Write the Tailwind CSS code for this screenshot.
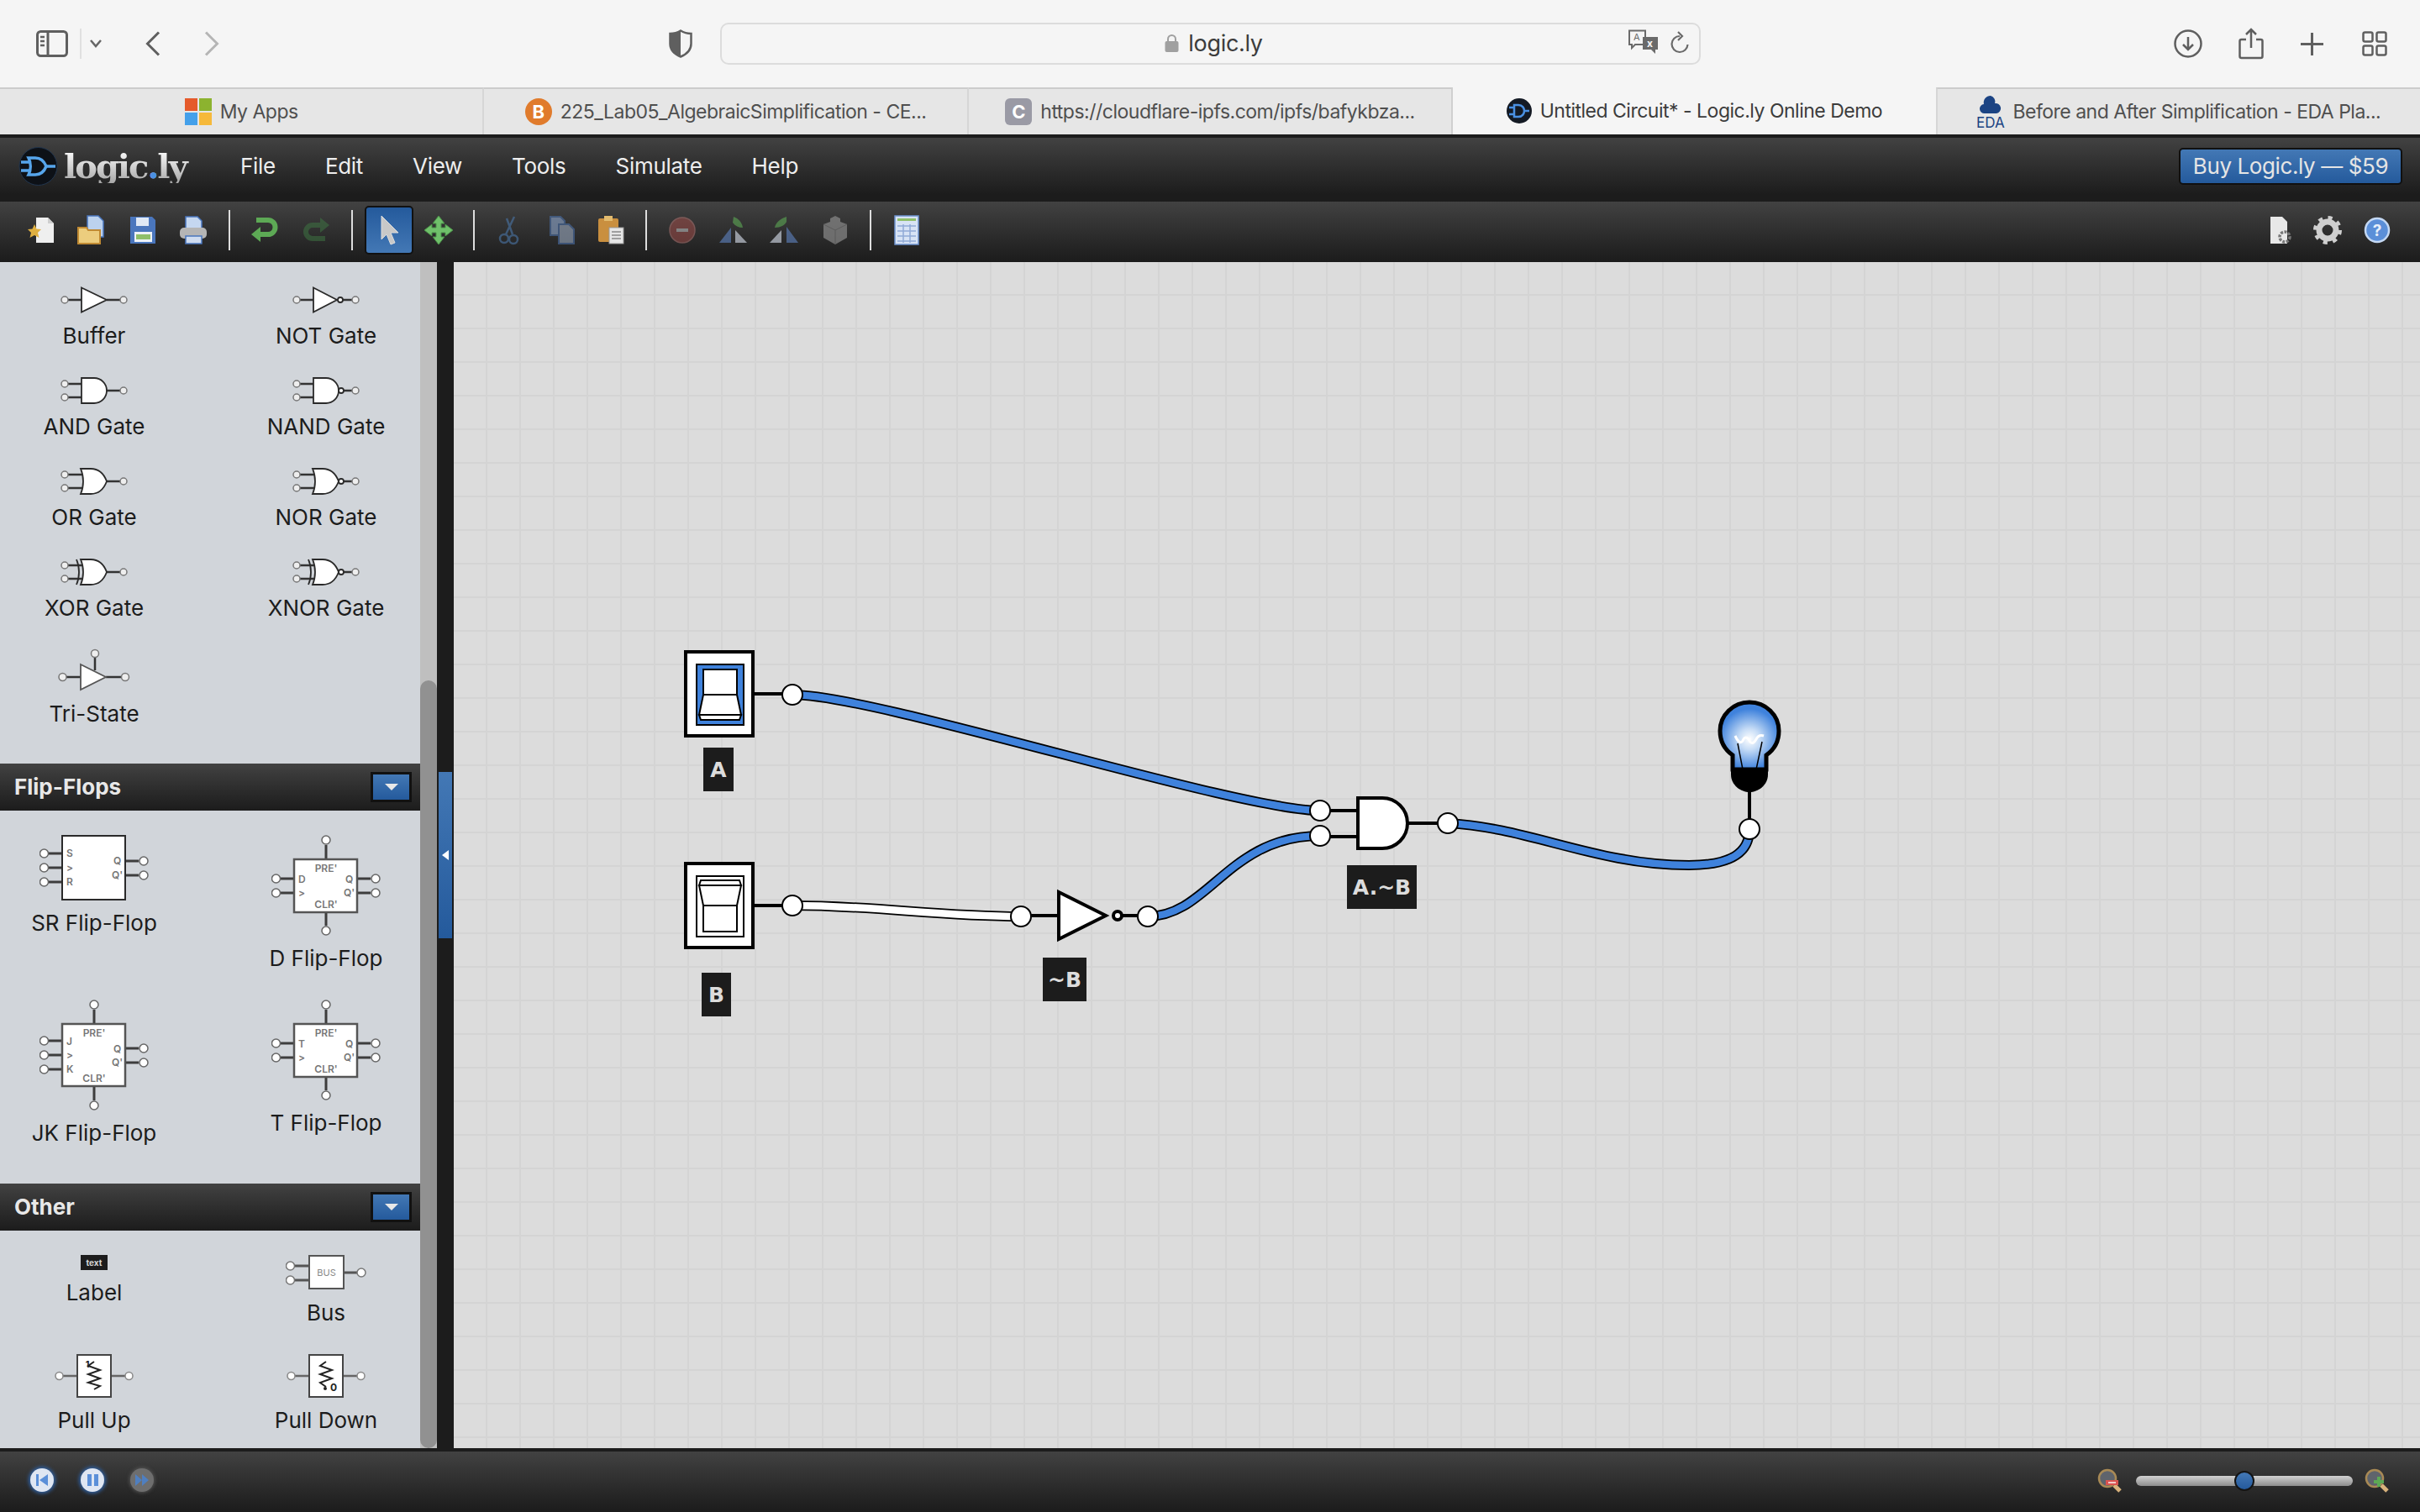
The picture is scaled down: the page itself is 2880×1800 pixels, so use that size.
<!DOCTYPE html>
<html lang="en">
<head>
  <meta charset="UTF-8">
  <title>Untitled Circuit* - Logic.ly Online Demo</title>
  <script src="https://cdn.jsdelivr.net/npm/@tailwindcss/browser@4"></script>
</head>
<body class="w-[2880px] h-[1800px] overflow-hidden flex flex-col bg-[#1c1c1c] font-[family-name:Inter,'Noto_Sans',sans-serif]">

  <!-- shared gate drawings -->
  <svg class="hidden">
    <symbol id="pins-in" viewBox="0 0 80 32">
      <path d="M9 8H26M9 24H26M55 16H71" stroke="#333" stroke-width="2.500" fill="none"/>
      <circle cx="5" cy="8" r="4" fill="#eee" stroke="#777" stroke-width="1.500"/>
      <circle cx="5" cy="24" r="4" fill="#eee" stroke="#777" stroke-width="1.500"/>
      <circle cx="75" cy="16" r="4" fill="#eee" stroke="#777" stroke-width="1.500"/>
    </symbol>
  </svg>

  <!-- browser toolbar -->
  <div class="h-[104px] shrink-0 bg-[#f5f5f5] flex items-center">
    <svg class="ml-[43px] w-[38px] h-[32px]" viewBox="0 0 38 32" fill="none" stroke="#5f5f5f" stroke-width="3"><rect x="1.500" y="1.500" width="35" height="29" rx="4"/><path d="M14 2V30"/><path d="M5 8H10M5 13H10M5 18H10" stroke-width="2.500"/></svg>
    <div class="ml-[14px] w-[2px] h-[36px] bg-[#e0e0e0]"></div>
    <svg class="ml-[10px] w-[14px] h-[10px]" viewBox="0 0 14 10" fill="none" stroke="#666" stroke-width="2.500"><path d="M1 1L7 8L13 1"/></svg>
    <svg class="ml-[52px] w-[18px] h-[30px]" viewBox="0 0 18 30" fill="none" stroke="#5f5f5f" stroke-width="3"><path d="M16 1.500L2.500 15L16 28.500"/></svg>
    <svg class="ml-[52px] w-[18px] h-[30px]" viewBox="0 0 18 30" fill="none" stroke="#b5b5b5" stroke-width="3"><path d="M2 1.500L15.500 15L2 28.500"/></svg>
    <svg class="ml-[535px] w-[28px] h-[34px]" viewBox="0 0 28 34"><path d="M14 1.500C18 4 22 5 26.500 5V17C26.500 25 20 30 14 32.500C8 30 1.500 25 1.500 17V5C6 5 10 4 14 1.500Z" fill="none" stroke="#5f5f5f" stroke-width="2.500"/><path d="M14 1.500C10 4 6 5 1.500 5V17C1.500 25 8 30 14 32.500Z" fill="#5f5f5f"/></svg>
    <div class="relative ml-[33px] w-[1167px] h-[50px] pl-[8px] pb-[2px] border-2 border-[#dcdcdc] rounded-[10px] flex items-center justify-center gap-[11px]">
      <svg class="w-[17px] h-[22px]" viewBox="0 0 17 22"><path d="M4 10V6.500a4.500 4.500 0 0 1 9 0V10" fill="none" stroke="#a0a0a0" stroke-width="2"/><rect x="0.500" y="9" width="16" height="13" rx="2" fill="#a0a0a0"/></svg>
      <span class="text-[27px] leading-none text-[#3c3c3c] tracking-[-0.3px]">logic.ly</span>
      <svg class="absolute right-[47px] top-[6px] w-[38px] h-[30px]" viewBox="0 0 38 30"><path d="M2 1.500H21V18H9L5 22V18H2Z" fill="#f5f5f5" stroke="#6a6a6a" stroke-width="2"/><path d="M18 9H36V24H33V29L28 24H18Z" fill="#6a6a6a"/><text x="7" y="13" font-size="11" fill="#6a6a6a">A</text><text x="23" y="21" font-size="12" font-weight="700" fill="#f5f5f5">x</text></svg>
      <svg class="absolute right-[12px] top-[8px] w-[22px] h-[28px]" viewBox="0 0 22 28" fill="none" stroke="#6a6a6a" stroke-width="2.200"><path d="M11 6A9.500 9.500 0 1 0 20.500 16"/><path d="M9 1L14 6L9 11"/></svg>
    </div>
    <div class="ml-auto pr-[39px] flex items-center">
      <svg class="w-[34px] h-[34px]" viewBox="0 0 34 34" fill="none" stroke="#5f5f5f" stroke-width="2.500"><circle cx="17" cy="17" r="15.500"/><path d="M17 9V24M11 18L17 24L23 18"/></svg>
      <svg class="ml-[43px] w-[30px] h-[38px]" viewBox="0 0 30 38" fill="none" stroke="#5f5f5f" stroke-width="2.500"><path d="M9 14H3.500a2 2 0 0 0-2 2V34a2 2 0 0 0 2 2H26.500a2 2 0 0 0 2-2V16a2 2 0 0 0-2-2H21"/><path d="M15 24V2M9 8L15 2L21 8"/></svg>
      <svg class="ml-[44px] w-[27px] h-[27px]" viewBox="0 0 27 27" fill="none" stroke="#5f5f5f" stroke-width="3"><path d="M13.500 0V27M0 13.500H27"/></svg>
      <svg class="ml-[46px] w-[30px] h-[30px]" viewBox="0 0 30 30" fill="none" stroke="#5f5f5f" stroke-width="2.500"><rect x="1.500" y="1.500" width="11" height="11" rx="2"/><rect x="17.500" y="1.500" width="11" height="11" rx="2"/><rect x="1.500" y="17.500" width="11" height="11" rx="2"/><rect x="17.500" y="17.500" width="11" height="11" rx="2"/></svg>
    </div>
  </div>

  <!-- tab strip -->
  <div class="h-[56px] shrink-0 flex text-[23px] leading-none text-[#4f4f4f] bg-[#f5f5f5]">
    <div class="flex-1 min-w-0 bg-[#e6e6e6] border-t-2 border-t-[#cccccc] border-r-2 border-r-[#d6d6d6] flex items-center justify-center gap-[10px]">
      <div class="grid grid-cols-2 gap-[2px] w-[32px] h-[32px]"><div class="bg-[#e55a2b]"></div><div class="bg-[#8cb32f]"></div><div class="bg-[#44a0ea]"></div><div class="bg-[#f6b93a]"></div></div>
      <span class="tracking-[-0.5px]">My Apps</span>
    </div>
    <div class="flex-1 min-w-0 bg-[#e6e6e6] border-t-2 border-t-[#cccccc] border-r-2 border-r-[#d6d6d6] flex items-center justify-center gap-[10px]">
      <div class="w-[32px] h-[32px] rounded-full bg-[#e07b2c] text-white text-[22px] font-bold flex items-center justify-center">B</div>
      <span class="tracking-[-0.5px] whitespace-nowrap">225_Lab05_AlgebraicSimplification - CE...</span>
    </div>
    <div class="flex-1 min-w-0 bg-[#e6e6e6] border-t-2 border-t-[#cccccc] border-r-2 border-r-[#cfcfcf] flex items-center justify-center gap-[10px]">
      <div class="w-[32px] h-[32px] rounded-[6px] bg-[#9a9aa5] text-white text-[22px] font-bold flex items-center justify-center">C</div>
      <span class="tracking-[-0.5px] whitespace-nowrap">https://cloudflare-ipfs.com/ipfs/bafykbza...</span>
    </div>
    <div class="flex-1 min-w-0 flex items-center justify-center gap-[10px] text-[#3c3c3c]">
      <svg class="w-[30px] h-[30px]" viewBox="0 0 30 30"><circle cx="15" cy="15" r="15" fill="#141a24"/><path d="M3 11H9M3 19H9M21 15H27M9 8H14C19 8 21 12 21 15C21 18 19 22 14 22H9Z" fill="none" stroke="#4a90e2" stroke-width="2.500"/></svg>
      <span class="tracking-[-0.5px] whitespace-nowrap">Untitled Circuit* - Logic.ly Online Demo</span>
    </div>
    <div class="flex-1 min-w-0 bg-[#e6e6e6] border-t-2 border-t-[#cccccc] border-l-2 border-l-[#d6d6d6] flex items-center justify-center gap-[10px]">
      <div class="w-[33px] h-[44px] flex flex-col items-center justify-end">
        <svg class="w-[26px] h-[24px]" viewBox="0 0 26 24"><path d="M6 22a5.500 5.500 0 0 1-1-11a8 8 0 0 1 8-10a7 7 0 0 1 5 9a6 6 0 0 1 2 12Z" fill="#1b4383"/></svg>
        <span class="text-[17px] leading-[18px] text-[#1b4383]">EDA</span>
      </div>
      <span class="tracking-[-0.5px] whitespace-nowrap">Before and After Simplification - EDA Pla...</span>
    </div>
  </div>

  <!-- logic.ly menu bar -->
  <div class="mt-[4px] h-[68px] shrink-0 bg-gradient-to-b from-[#424242] to-[#1c1c1c] flex items-center">
    <svg class="ml-[22px] w-[47px] h-[46px]" viewBox="0 0 47 46"><circle cx="23.500" cy="23" r="22.500" fill="#0d1117" stroke="#22364f" stroke-width="1"/><path d="M3 18H13M3 28H13M33 23H44" fill="none" stroke="#56a5ec" stroke-width="3.500"/><path d="M12 13H20C27 13 31 18 33 23C31 28 27 33 20 33H12C15 27 15 19 12 13Z" fill="none" stroke="#56a5ec" stroke-width="3.500"/></svg>
    <div class="ml-[7px] w-[160px] font-[family-name:'DejaVu_Serif',serif] font-bold text-[40px] leading-none tracking-[-2px] bg-gradient-to-b from-white to-[#a8a8a8] bg-clip-text text-transparent whitespace-nowrap">logic<span class="text-[#4a90e2]">.</span>ly</div>
    <nav class="ml-[50px] flex gap-[59px] text-[26px] leading-none tracking-[-0.3px] text-[#eeeeee]">
      <span>File</span><span>Edit</span><span>View</span><span>Tools</span><span>Simulate</span><span>Help</span>
    </nav>
    <div class="ml-auto mr-[21px] w-[266px] h-[44px] rounded-[5px] border-2 border-[#101010] bg-gradient-to-b from-[#4378b5] to-[#245a9c] text-[26px] leading-none tracking-[-0.4px] text-[#e5e5e5] flex items-center justify-center whitespace-nowrap">Buy Logic.ly — $59</div>
  </div>

  <!-- tool bar -->
  <div class="mt-[8px] h-[72px] pb-[4px] shrink-0 bg-gradient-to-b from-[#424242] to-[#1c1c1c] flex items-center">
    <svg class="ml-[32px] w-[36px] h-[36px]" viewBox="0 0 36 36"><path d="M11 3H25L32 10V33H11Z" fill="#efefef"/><path d="M25 3V10H32Z" fill="#cfcfcf"/><path d="M9 11L11.500 16.500L17 17L13 21L14.500 27L9 24L3.500 27L5 21L1 17L6.500 16.500Z" fill="#e0b040"/></svg>
    <svg class="ml-[22px] w-[36px] h-[36px]" viewBox="0 0 36 36"><path d="M14 1H27L33 7V26H14Z" fill="#bcd2ee" stroke="#4a76bd" stroke-width="1.500"/><path d="M3 15H13L15 18H29V34H3Z" fill="#eccd7e" stroke="#c08a33" stroke-width="2"/></svg>
    <svg class="ml-[26px] w-[36px] h-[36px]" viewBox="0 0 36 36"><path d="M3 2H29L33 6V34H3Z" fill="#4a76bd"/><rect x="10" y="3" width="15" height="10" fill="#dfe8f5"/><rect x="8" y="20" width="21" height="12" fill="#eef2f8"/><rect x="10" y="23" width="17" height="6" fill="#8fbf6a"/></svg>
    <svg class="ml-[24px] w-[36px] h-[36px]" viewBox="0 0 36 36"><path d="M9 2H23L28 7V18H9Z" fill="#c5d7f0" stroke="#4a76bd" stroke-width="1.500"/><rect x="2" y="15" width="32" height="13" rx="5" fill="#b5b5b5"/><rect x="9" y="25" width="19" height="9" fill="#cfdcf0" stroke="#4a76bd" stroke-width="1.500"/></svg>
    <div class="ml-[24px] w-[2px] h-[48px] bg-[#dddddd]"></div>
    <svg class="ml-[22px] w-[36px] h-[36px]" viewBox="0 0 36 36" fill="none"><path d="M9 6H23a8 8 0 0 1 0 17H8" stroke="#5da955" stroke-width="6"/><path d="M14 14L3 23L14 32Z" fill="#5da955"/></svg>
    <svg class="ml-[26px] w-[36px] h-[36px] opacity-50" viewBox="0 0 36 36" fill="none"><path d="M29 12H14a7 7 0 0 0 0 16H29" stroke="#3f7a44" stroke-width="6"/><path d="M23 3L34 12L23 21Z" fill="#3f7a44"/></svg>
    <div class="ml-[24px] w-[2px] h-[48px] bg-[#dddddd]"></div>
    <div class="ml-[14px] w-[58px] h-[58px] rounded-[5px] border-2 border-[#111111] bg-gradient-to-b from-[#245a9c] to-[#4378b5] flex items-center justify-center">
      <svg class="w-[28px] h-[36px]" viewBox="0 0 28 36"><path d="M5 1L25 21L16 21L21 33L16 35L11 23L5 29Z" fill="#c8c8c8" stroke="#dddddd"/></svg>
    </div>
    <svg class="ml-[12px] w-[36px] h-[36px]" viewBox="0 0 36 36"><path d="M18 1L25 10H21V15H26V11L35 18L26 25V21H21V26H25L18 35L11 26H15V21H10V25L1 18L10 11V15H15V10H11Z" fill="#6fc06a" stroke="#4a8f48"/></svg>
    <div class="ml-[23px] w-[2px] h-[48px] bg-[#dddddd]"></div>
    <svg class="ml-[24px] w-[36px] h-[36px] opacity-60" viewBox="0 0 36 36" fill="none" stroke="#4a76a8" stroke-width="2.500"><path d="M23 2L13 23M14 4L21 23"/><circle cx="11" cy="28" r="5"/><circle cx="22" cy="29" r="5"/></svg>
    <svg class="ml-[25px] w-[36px] h-[36px] opacity-60" viewBox="0 0 36 36"><path d="M5 2H17L22 7V24H5Z" fill="#8fa8cf" stroke="#4a6fa8" stroke-width="2"/><path d="M15 11H27L33 17V34H15Z" fill="#9aa9bf" stroke="#4a6fa8" stroke-width="2"/></svg>
    <svg class="ml-[23px] w-[36px] h-[36px]" viewBox="0 0 36 36"><rect x="3" y="4" width="24" height="28" rx="2" fill="#c98f3f"/><rect x="10" y="1" width="10" height="6" fill="#e2bb6f"/><rect x="16" y="15" width="17" height="19" fill="#e6e6e6" stroke="#999999"/><path d="M19 20H30M19 24H30M19 28H30" stroke="#888888" stroke-width="1.500"/></svg>
    <div class="ml-[23px] w-[2px] h-[48px] bg-[#dddddd]"></div>
    <svg class="ml-[24px] w-[36px] h-[36px] opacity-45" viewBox="0 0 36 36"><circle cx="18" cy="18" r="15" fill="#b5524e" stroke="#d08582" stroke-width="1.500"/><rect x="11" y="16" width="14" height="4" fill="#e8e8e8"/></svg>
    <svg class="ml-[25px] w-[36px] h-[36px] opacity-60" viewBox="0 0 36 36"><path d="M15 15V33H1Z" fill="#5f84c2"/><path d="M20 18V33H34Z" fill="#dce4f2"/><path d="M18 2C24 4 28 9 29 15C24 15 20 13 17 9Z" fill="#5da955"/></svg>
    <svg class="ml-[24px] w-[36px] h-[36px] opacity-60" viewBox="0 0 36 36"><path d="M21 14V33H35Z" fill="#5f84c2"/><path d="M15 18V33H1Z" fill="#dce4f2"/><path d="M21 2C14 4 8 9 7 15C14 15 19 12 21 8Z" fill="#5da955"/></svg>
    <svg class="ml-[25px] w-[36px] h-[36px] opacity-70" viewBox="0 0 36 36"><path d="M18 1L24 4V8L32 11V27L18 35L4 27V11L12 8V4Z" fill="#8a8a8a"/><path d="M4 11L18 18L32 11M18 18V35" stroke="#6f6f6f" fill="none"/></svg>
    <div class="ml-[23px] w-[2px] h-[48px] bg-[#dddddd]"></div>
    <svg class="ml-[24px] w-[36px] h-[36px]" viewBox="0 0 36 36"><rect x="4" y="1" width="28" height="34" fill="#d7e3f5" stroke="#6f94cf" stroke-width="1.500"/><rect x="7" y="4" width="22" height="3" fill="#8fbf6a"/><path d="M7 13H29M7 19H29M7 25H29M7 31H29M14 11V33M22 11V33" stroke="#90aad6" stroke-width="1.500"/></svg>
    <div class="ml-auto pr-[33px] flex items-center">
      <svg class="w-[36px] h-[36px]" viewBox="0 0 36 36"><path d="M8 2H22L28 8V34H8Z" fill="#e8e8e8"/><circle cx="25" cy="26" r="6" fill="none" stroke="#777777" stroke-width="3.500" stroke-dasharray="3 1.500"/></svg>
      <svg class="ml-[22px] w-[36px] h-[36px]" viewBox="0 0 36 36"><circle cx="18" cy="18" r="10" fill="none" stroke="#cfcfcf" stroke-width="7"/><circle cx="18" cy="18" r="14.500" fill="none" stroke="#cfcfcf" stroke-width="5" stroke-dasharray="5 6.400"/></svg>
      <svg class="ml-[23px] w-[36px] h-[36px]" viewBox="0 0 36 36"><circle cx="18" cy="18" r="14" fill="#5b8fd8" stroke="#c4d8f3" stroke-width="2.500"/><text x="18" y="25" text-anchor="middle" font-size="19" font-weight="700" fill="#e6eefa">?</text></svg>
    </div>
  </div>

  <!-- workspace -->
  <div class="flex-1 min-h-0 flex">
    <aside class="w-[500px] shrink-0 bg-[#d1d5da] text-[26px] leading-[34px] text-[#1c1c1c] text-center overflow-hidden">
      <div class="pt-[29px] pb-[42px] grid grid-cols-[224px_224px] gap-x-[52px] gap-y-[32px]">
        <div class="flex flex-col items-center gap-[10px]">
          <svg class="w-[80px] h-[32px]" viewBox="0 0 80 32"><path d="M9 16H25M55 16H71" stroke="#333" stroke-width="2.500"/><path d="M25 1.500L55 16L25 30.500Z" fill="#fff" stroke="#2a2a2a" stroke-width="1.800"/><circle cx="5" cy="16" r="4" fill="#eee" stroke="#777" stroke-width="1.500"/><circle cx="75" cy="16" r="4" fill="#eee" stroke="#777" stroke-width="1.500"/></svg>
          <span>Buffer</span>
        </div>
        <div class="flex flex-col items-center gap-[10px]">
          <svg class="w-[80px] h-[32px]" viewBox="0 0 80 32"><path d="M9 16H25M60 16H71" stroke="#333" stroke-width="2.500"/><path d="M25 1.500L53 16L25 30.500Z" fill="#fff" stroke="#2a2a2a" stroke-width="1.800"/><circle cx="57" cy="16" r="3" fill="#fff" stroke="#2a2a2a" stroke-width="1.800"/><circle cx="5" cy="16" r="4" fill="#eee" stroke="#777" stroke-width="1.500"/><circle cx="75" cy="16" r="4" fill="#eee" stroke="#777" stroke-width="1.500"/></svg>
          <span>NOT Gate</span>
        </div>
        <div class="flex flex-col items-center gap-[10px]">
          <svg class="w-[80px] h-[32px]" viewBox="0 0 80 32"><use href="#pins-in"/><path d="M25 1H40a15 15 0 0 1 0 30H25Z" fill="#fff" stroke="#2a2a2a" stroke-width="1.800"/></svg>
          <span>AND Gate</span>
        </div>
        <div class="flex flex-col items-center gap-[10px]">
          <svg class="w-[80px] h-[32px]" viewBox="0 0 80 32"><use href="#pins-in"/><path d="M25 1H40a15 15 0 0 1 0 30H25Z" fill="#fff" stroke="#2a2a2a" stroke-width="1.800"/><circle cx="58" cy="16" r="3" fill="#fff" stroke="#2a2a2a" stroke-width="1.800"/></svg>
          <span>NAND Gate</span>
        </div>
        <div class="flex flex-col items-center gap-[10px]">
          <svg class="w-[80px] h-[32px]" viewBox="0 0 80 32"><use href="#pins-in"/><path d="M24 1H36C46 1 52 8 55 16C52 24 46 31 36 31H24C28 22 28 10 24 1Z" fill="#fff" stroke="#2a2a2a" stroke-width="1.800"/></svg>
          <span>OR Gate</span>
        </div>
        <div class="flex flex-col items-center gap-[10px]">
          <svg class="w-[80px] h-[32px]" viewBox="0 0 80 32"><use href="#pins-in"/><path d="M24 1H36C46 1 52 8 55 16C52 24 46 31 36 31H24C28 22 28 10 24 1Z" fill="#fff" stroke="#2a2a2a" stroke-width="1.800"/><circle cx="58" cy="16" r="3" fill="#fff" stroke="#2a2a2a" stroke-width="1.800"/></svg>
          <span>NOR Gate</span>
        </div>
        <div class="flex flex-col items-center gap-[10px]">
          <svg class="w-[80px] h-[32px]" viewBox="0 0 80 32"><use href="#pins-in"/><path d="M19 1C23 10 23 22 19 31" fill="none" stroke="#2a2a2a" stroke-width="1.800"/><path d="M24 1H36C46 1 52 8 55 16C52 24 46 31 36 31H24C28 22 28 10 24 1Z" fill="#fff" stroke="#2a2a2a" stroke-width="1.800"/></svg>
          <span>XOR Gate</span>
        </div>
        <div class="flex flex-col items-center gap-[10px]">
          <svg class="w-[80px] h-[32px]" viewBox="0 0 80 32"><use href="#pins-in"/><path d="M19 1C23 10 23 22 19 31" fill="none" stroke="#2a2a2a" stroke-width="1.800"/><path d="M24 1H36C46 1 52 8 55 16C52 24 46 31 36 31H24C28 22 28 10 24 1Z" fill="#fff" stroke="#2a2a2a" stroke-width="1.800"/><circle cx="58" cy="16" r="3" fill="#fff" stroke="#2a2a2a" stroke-width="1.800"/></svg>
          <span>XNOR Gate</span>
        </div>
        <div class="-mt-[1px] flex flex-col items-center gap-[9px]">
          <svg class="w-[86px] h-[52px]" viewBox="0 0 86 52"><path d="M10 34H27M57 34H75M44 11V26" stroke="#333" stroke-width="2.500"/><path d="M27 19L57 34L27 49Z" fill="#fff" stroke="#555" stroke-width="1.800"/><circle cx="5.500" cy="34" r="4.500" fill="#eee" stroke="#777" stroke-width="1.500"/><circle cx="80" cy="34" r="4.500" fill="#eee" stroke="#777" stroke-width="1.500"/><circle cx="44" cy="6" r="4.500" fill="#eee" stroke="#777" stroke-width="1.500"/></svg>
          <span>Tri-State</span>
        </div>
      </div>

      <div class="h-[56px] pl-[17px] pr-[10px] flex items-center justify-between bg-gradient-to-b from-[#424242] to-[#1c1c1c]">
        <span class="font-bold text-[#e8e8e8]">Flip-Flops</span>
        <div class="w-[49px] h-[36px] border-[3px] border-[#111111] bg-gradient-to-b from-[#4378b5] to-[#245a9c] flex items-center justify-center">
          <div class="w-0 h-0 border-x-[8px] border-x-transparent border-t-[8px] border-t-[#e8e8e8]"></div>
        </div>
      </div>
      <div class="pt-[29px] pb-[43px] grid grid-cols-[224px_224px] gap-x-[52px] gap-y-[31px]">
        <div class="flex flex-col items-center gap-[10px]">
          <svg class="w-[130px] h-[78px]" viewBox="0 0 130 78"><path d="M11 22H26M11 39H26M11 56H26M103 31H118M103 48H118" stroke="#3d3d3d" stroke-width="3"/><rect x="27" y="1" width="75" height="76" fill="#fff" stroke="#2a2a2a" stroke-width="2"/><g fill="#777" font-size="12" font-weight="600"><text x="32" y="26">S</text><text x="32" y="43">&gt;</text><text x="32" y="60">R</text><text x="88" y="35">Q</text><text x="86" y="52">Q'</text></g><g fill="#fff" stroke="#666" stroke-width="1.500"><circle cx="5.500" cy="22" r="5"/><circle cx="5.500" cy="39" r="5"/><circle cx="5.500" cy="56" r="5"/><circle cx="124" cy="31" r="5"/><circle cx="124" cy="48" r="5"/></g></svg>
          <span>SR Flip-Flop</span>
        </div>
        <div class="flex flex-col items-center gap-[8px]">
          <svg class="w-[130px] h-[122px]" viewBox="0 0 130 122"><path d="M11 52H26M11 69H26M103 52H118M103 69H118M65 12V28M65 93V108" stroke="#3d3d3d" stroke-width="3"/><rect x="27" y="29" width="75" height="63" fill="#fff" stroke="#555" stroke-width="2.500"/><g fill="#777" font-size="12" font-weight="600"><text x="65" y="44" text-anchor="middle">PRE'</text><text x="65" y="87" text-anchor="middle">CLR'</text><text x="32" y="57">D</text><text x="32" y="73">&gt;</text><text x="88" y="57">Q</text><text x="86" y="73">Q'</text></g><g fill="#fff" stroke="#666" stroke-width="1.500"><circle cx="5.500" cy="52" r="5"/><circle cx="5.500" cy="69" r="5"/><circle cx="124" cy="52" r="5"/><circle cx="124" cy="69" r="5"/><circle cx="65" cy="6" r="5"/><circle cx="65" cy="114" r="5"/></g></svg>
          <span>D Flip-Flop</span>
        </div>
        <div class="flex flex-col items-center gap-[9px]">
          <svg class="w-[130px] h-[134px]" viewBox="0 0 130 134"><path d="M11 50H26M11 67H26M11 84H26M103 59H118M103 76H118M65 13V29M65 105V121" stroke="#3d3d3d" stroke-width="3"/><rect x="27" y="30" width="75" height="74" fill="#fff" stroke="#555" stroke-width="2.500"/><g fill="#777" font-size="12" font-weight="600"><text x="65" y="45" text-anchor="middle">PRE'</text><text x="65" y="99" text-anchor="middle">CLR'</text><text x="32" y="55">J</text><text x="32" y="71">&gt;</text><text x="32" y="88">K</text><text x="88" y="64">Q</text><text x="86" y="80">Q'</text></g><g fill="#fff" stroke="#666" stroke-width="1.500"><circle cx="5.500" cy="50" r="5"/><circle cx="5.500" cy="67" r="5"/><circle cx="5.500" cy="84" r="5"/><circle cx="124" cy="59" r="5"/><circle cx="124" cy="76" r="5"/><circle cx="65" cy="7" r="5"/><circle cx="65" cy="127" r="5"/></g></svg>
          <span>JK Flip-Flop</span>
        </div>
        <div class="flex flex-col items-center gap-[9px]">
          <svg class="w-[130px] h-[122px]" viewBox="0 0 130 122"><path d="M11 53H26M11 70H26M103 53H118M103 70H118M65 13V29M65 93V109" stroke="#3d3d3d" stroke-width="3"/><rect x="27" y="30" width="75" height="63" fill="#fff" stroke="#555" stroke-width="2.500"/><g fill="#777" font-size="12" font-weight="600"><text x="65" y="45" text-anchor="middle">PRE'</text><text x="65" y="88" text-anchor="middle">CLR'</text><text x="32" y="58">T</text><text x="32" y="74">&gt;</text><text x="88" y="58">Q</text><text x="86" y="74">Q'</text></g><g fill="#fff" stroke="#666" stroke-width="1.500"><circle cx="5.500" cy="53" r="5"/><circle cx="5.500" cy="70" r="5"/><circle cx="124" cy="53" r="5"/><circle cx="124" cy="70" r="5"/><circle cx="65" cy="7" r="5"/><circle cx="65" cy="115" r="5"/></g></svg>
          <span>T Flip-Flop</span>
        </div>
      </div>

      <div class="h-[56px] pl-[17px] pr-[10px] flex items-center justify-between bg-gradient-to-b from-[#424242] to-[#1c1c1c]">
        <span class="font-bold text-[#e8e8e8]">Other</span>
        <div class="w-[49px] h-[36px] border-[3px] border-[#111111] bg-gradient-to-b from-[#4378b5] to-[#245a9c] flex items-center justify-center">
          <div class="w-0 h-0 border-x-[8px] border-x-transparent border-t-[8px] border-t-[#e8e8e8]"></div>
        </div>
      </div>
      <div class="pt-[29px] grid grid-cols-[224px_224px] gap-x-[52px] gap-y-[32px]">
        <div class="flex flex-col items-center gap-[10px]">
          <div class="w-[32px] h-[18px] bg-[#1c1c1c] text-[#d5d5d5] text-[10px] leading-[18px] font-bold">text</div>
          <span>Label</span>
        </div>
        <div class="flex flex-col items-center gap-[11px]">
          <svg class="w-[96px] h-[41px]" viewBox="0 0 96 41"><path d="M10 13H27M10 30H27M70 21H85" stroke="#555" stroke-width="3"/><rect x="28" y="1" width="41" height="39" fill="#fff" stroke="#555" stroke-width="2"/><text x="48.500" y="25" text-anchor="middle" font-size="11" fill="#888">BUS</text><g fill="#fff" stroke="#777" stroke-width="1.500"><circle cx="5.500" cy="13" r="5"/><circle cx="5.500" cy="30" r="5"/><circle cx="90" cy="21" r="5"/></g></svg>
          <span>Bus</span>
        </div>
        <div class="flex flex-col items-center gap-[10px]">
          <svg class="w-[94px] h-[52px]" viewBox="0 0 94 52"><path d="M10 26H27M67 26H84" stroke="#666" stroke-width="2.500"/><rect x="27" y="1" width="40" height="50" fill="#fff" stroke="#444" stroke-width="2"/><text x="39" y="16" text-anchor="middle" font-size="11" font-weight="700" fill="#222">1</text><path d="M47 9L40 14L54 19L40 24L54 29L40 34L54 38L47 42" fill="none" stroke="#222" stroke-width="2"/><g fill="#fff" stroke="#888" stroke-width="1.500"><circle cx="5.500" cy="26" r="4.500"/><circle cx="88.500" cy="26" r="4.500"/></g></svg>
          <span>Pull Up</span>
        </div>
        <div class="flex flex-col items-center gap-[10px]">
          <svg class="w-[94px] h-[52px]" viewBox="0 0 94 52"><path d="M10 26H27M67 26H84" stroke="#666" stroke-width="2.500"/><rect x="27" y="1" width="40" height="50" fill="#fff" stroke="#444" stroke-width="2"/><path d="M47 9L40 14L54 19L40 24L54 29L40 34L47 39" fill="none" stroke="#222" stroke-width="2"/><circle cx="46" cy="41" r="2" fill="#222"/><text x="56" y="44" text-anchor="middle" font-size="12" font-weight="700" fill="#222">0</text><g fill="#fff" stroke="#888" stroke-width="1.500"><circle cx="5.500" cy="26" r="4.500"/><circle cx="88.500" cy="26" r="4.500"/></g></svg>
          <span>Pull Down</span>
        </div>
      </div>
    </aside>

    <!-- sidebar scrollbar -->
    <div class="w-[20px] shrink-0 bg-[#bfbfbf] flex flex-col justify-end">
      <div class="h-[914px] rounded-[10px] bg-[#919191]"></div>
    </div>

    <!-- collapse handle -->
    <div class="w-[20px] shrink-0 bg-[#1c1c1c] pt-[607px] flex justify-center">
      <div class="w-[16px] h-[198px] bg-gradient-to-b from-[#4378b5] to-[#245a9c] flex items-center justify-center">
        <div class="w-0 h-0 border-y-[6px] border-y-transparent border-r-[8px] border-r-white"></div>
      </div>
    </div>

    <!-- circuit canvas -->
    <main class="flex-1 min-w-0 bg-[#dcdcdc] bg-[linear-gradient(to_right,#d4d4d4_2px,transparent_2px),linear-gradient(to_bottom,#d4d4d4_2px,transparent_2px)] bg-[size:40px_40px] bg-[position:38px_38px]">
      <!-- viewBox keeps page coordinates so the parts line up with the screenshot -->
      <svg class="block w-[2340px] h-[1412px]" viewBox="540 312 2340 1412" fill="none">
        <defs>
          <radialGradient id="glow" gradientUnits="userSpaceOnUse" cx="2082" cy="880" r="36">
            <stop offset="0" stop-color="#ffffff"/>
            <stop offset="0.35" stop-color="#c6dcf6"/>
            <stop offset="1" stop-color="#3f82dc"/>
          </radialGradient>
        </defs>

        <!-- wires -->
        <g stroke="#000" stroke-width="12">
          <path d="M943 827C1043 827 1471 965 1571 965"/>
          <path d="M943 1078C1043 1078 1115 1091 1215 1091"/>
          <path d="M1366 1091C1438 1091 1462 995 1571 995"/>
          <path d="M1723 980C1820 985 1900 1030 2010 1030C2060 1030 2082 1015 2082 987"/>
        </g>
        <g stroke-width="8.500">
          <path d="M943 827C1043 827 1471 965 1571 965" stroke="#3f82dc"/>
          <path d="M943 1078C1043 1078 1115 1091 1215 1091" stroke="#fff"/>
          <path d="M1366 1091C1438 1091 1462 995 1571 995" stroke="#3f82dc"/>
          <path d="M1723 980C1820 985 1900 1030 2010 1030C2060 1030 2082 1015 2082 987" stroke="#3f82dc"/>
        </g>

        <!-- stubs -->
        <path d="M898 826H932M898 1078H932M1226 1090H1260M1336 1090H1356M1582 965H1615M1582 996H1615M1676 980H1712M2082 942V976" stroke="#000" stroke-width="4"/>

        <!-- switch A -->
        <rect x="816" y="776" width="80" height="100" fill="#fff" stroke="#000" stroke-width="4"/>
        <rect x="829" y="791" width="56" height="72" fill="#3f82dc" stroke="#000" stroke-width="2"/>
        <rect x="837" y="797" width="40" height="30" fill="#fff" stroke="#000" stroke-width="2"/>
        <path d="M837 827H877L882 851H832Z" fill="#fff" stroke="#000" stroke-width="2"/>
        <path d="M832 851H882L880 857H834Z" fill="#fff" stroke="#000" stroke-width="2"/>

        <!-- switch B -->
        <rect x="816" y="1028" width="80" height="100" fill="#fff" stroke="#000" stroke-width="4"/>
        <rect x="829" y="1043" width="56" height="72" fill="#fff" stroke="#000" stroke-width="2"/>
        <rect x="837" y="1078" width="40" height="31" fill="#fff" stroke="#000" stroke-width="2"/>
        <path d="M832 1054H882L877 1078H837Z" fill="#fff" stroke="#000" stroke-width="2"/>
        <path d="M834 1048H880L882 1054H832Z" fill="#fff" stroke="#000" stroke-width="2"/>

        <!-- NOT gate -->
        <path d="M1260 1062L1316 1090L1260 1118Z" fill="#fff" stroke="#000" stroke-width="4"/>
        <circle cx="1330" cy="1090" r="5" fill="#fff" stroke="#000" stroke-width="4"/>

        <!-- AND gate -->
        <path d="M1616 950H1645a30 30 0 0 1 0 60H1616Z" fill="#fff" stroke="#000" stroke-width="4"/>

        <!-- bulb -->
        <path d="M2062 916V899C2052 892 2047 882 2047 870A35 34 0 0 1 2117 870C2117 882 2112 892 2102 899V916Z" fill="url(#glow)" stroke="#000" stroke-width="5"/>
        <path d="M2068 885L2074 916M2097 883L2090 916" stroke="#000" stroke-width="1.500"/>
        <path d="M2065 876Q2071 889 2075 880Q2077 876 2081 880Q2085 889 2090 880Q2093 874 2099 876" stroke="#fff" stroke-width="3"/>
        <path d="M2060 916H2104V922C2104 935 2092 943 2082 943C2072 943 2060 935 2060 922Z" fill="#000"/>

        <!-- connection points -->
        <g fill="#fff" stroke="#000" stroke-width="2">
          <circle cx="943" cy="827" r="12"/>
          <circle cx="943" cy="1078" r="12"/>
          <circle cx="1215" cy="1091" r="12"/>
          <circle cx="1366" cy="1091" r="12"/>
          <circle cx="1571" cy="965" r="12"/>
          <circle cx="1571" cy="995" r="12"/>
          <circle cx="1723" cy="980" r="12"/>
          <circle cx="2082" cy="987" r="12"/>
        </g>

        <!-- labels -->
        <g fill="#1c1c1c">
          <rect x="837" y="890" width="36" height="52"/>
          <rect x="835" y="1158" width="35" height="52"/>
          <rect x="1241" y="1140" width="52" height="52"/>
          <rect x="1603" y="1030" width="83" height="52"/>
        </g>
        <g fill="#dcdcdc" font-size="25" font-weight="700" text-anchor="middle" font-family="'DejaVu Sans',sans-serif">
          <text x="855" y="925">A</text>
          <text x="852.500" y="1193">B</text>
          <text x="1267" y="1175">~B</text>
          <text x="1644.500" y="1065">A.~B</text>
        </g>
      </svg>
    </main>
  </div>

  <!-- status bar -->
  <div class="h-[76px] pb-[4px] shrink-0 border-t-4 border-[#1c1c1c] bg-gradient-to-b from-[#424242] to-[#1c1c1c] flex items-center">
    <div class="ml-[36px] w-[28px] h-[28px] rounded-full bg-[#dfe6f2] shadow-[0_0_4px_2px_#2f5f9f] flex items-center justify-center">
      <svg class="w-[16px] h-[14px]" viewBox="0 0 16 14" fill="#5b8fd8"><rect x="1" y="0" width="3" height="14"/><path d="M15 0V14L5 7Z"/></svg>
    </div>
    <div class="ml-[32px] w-[28px] h-[28px] rounded-full bg-[#dfe6f2] shadow-[0_0_4px_2px_#2f5f9f] flex items-center justify-center gap-[3px]">
      <div class="w-[5px] h-[14px] bg-[#5b8fd8]"></div><div class="w-[5px] h-[14px] bg-[#5b8fd8]"></div>
    </div>
    <div class="ml-[31px] w-[28px] h-[28px] rounded-full bg-[#6e6e6e] shadow-[0_0_4px_1px_#555555] flex items-center justify-center">
      <svg class="w-[18px] h-[14px]" viewBox="0 0 18 14" fill="#4f7fc0"><path d="M1 0L9 7L1 14ZM9 0L17 7L9 14Z"/></svg>
    </div>
    <div class="ml-auto mr-[36px] mt-[2px] flex items-center">
      <svg class="w-[30px] h-[30px]" viewBox="0 0 30 30"><path d="M20 20L27 27" stroke="#d8b27c" stroke-width="5"/><circle cx="12" cy="12" r="10" fill="#5f646c" stroke="#a98a55" stroke-width="2.500"/><rect x="10" y="14" width="15" height="6" fill="#d9534f"/><rect x="13" y="16" width="9" height="2" fill="#f3c9c7"/></svg>
      <div class="relative ml-[16px] w-[258px] h-[12px] rounded-full bg-gradient-to-b from-[#d2d2d2] to-[#8e8e8e]">
        <div class="absolute left-[117px] top-[-6px] w-[24px] h-[24px] rounded-full border-2 border-[#141414] bg-gradient-to-b from-[#4378b5] to-[#245a9c]"></div>
      </div>
      <svg class="ml-[14px] w-[30px] h-[30px]" viewBox="0 0 30 30"><path d="M20 20L27 27" stroke="#d8b27c" stroke-width="5"/><circle cx="12" cy="12" r="10" fill="#5f646c" stroke="#a98a55" stroke-width="2.500"/><path d="M17 10V22M11 16H23" stroke="#5da955" stroke-width="4"/></svg>
    </div>
  </div>
</body>
</html>
